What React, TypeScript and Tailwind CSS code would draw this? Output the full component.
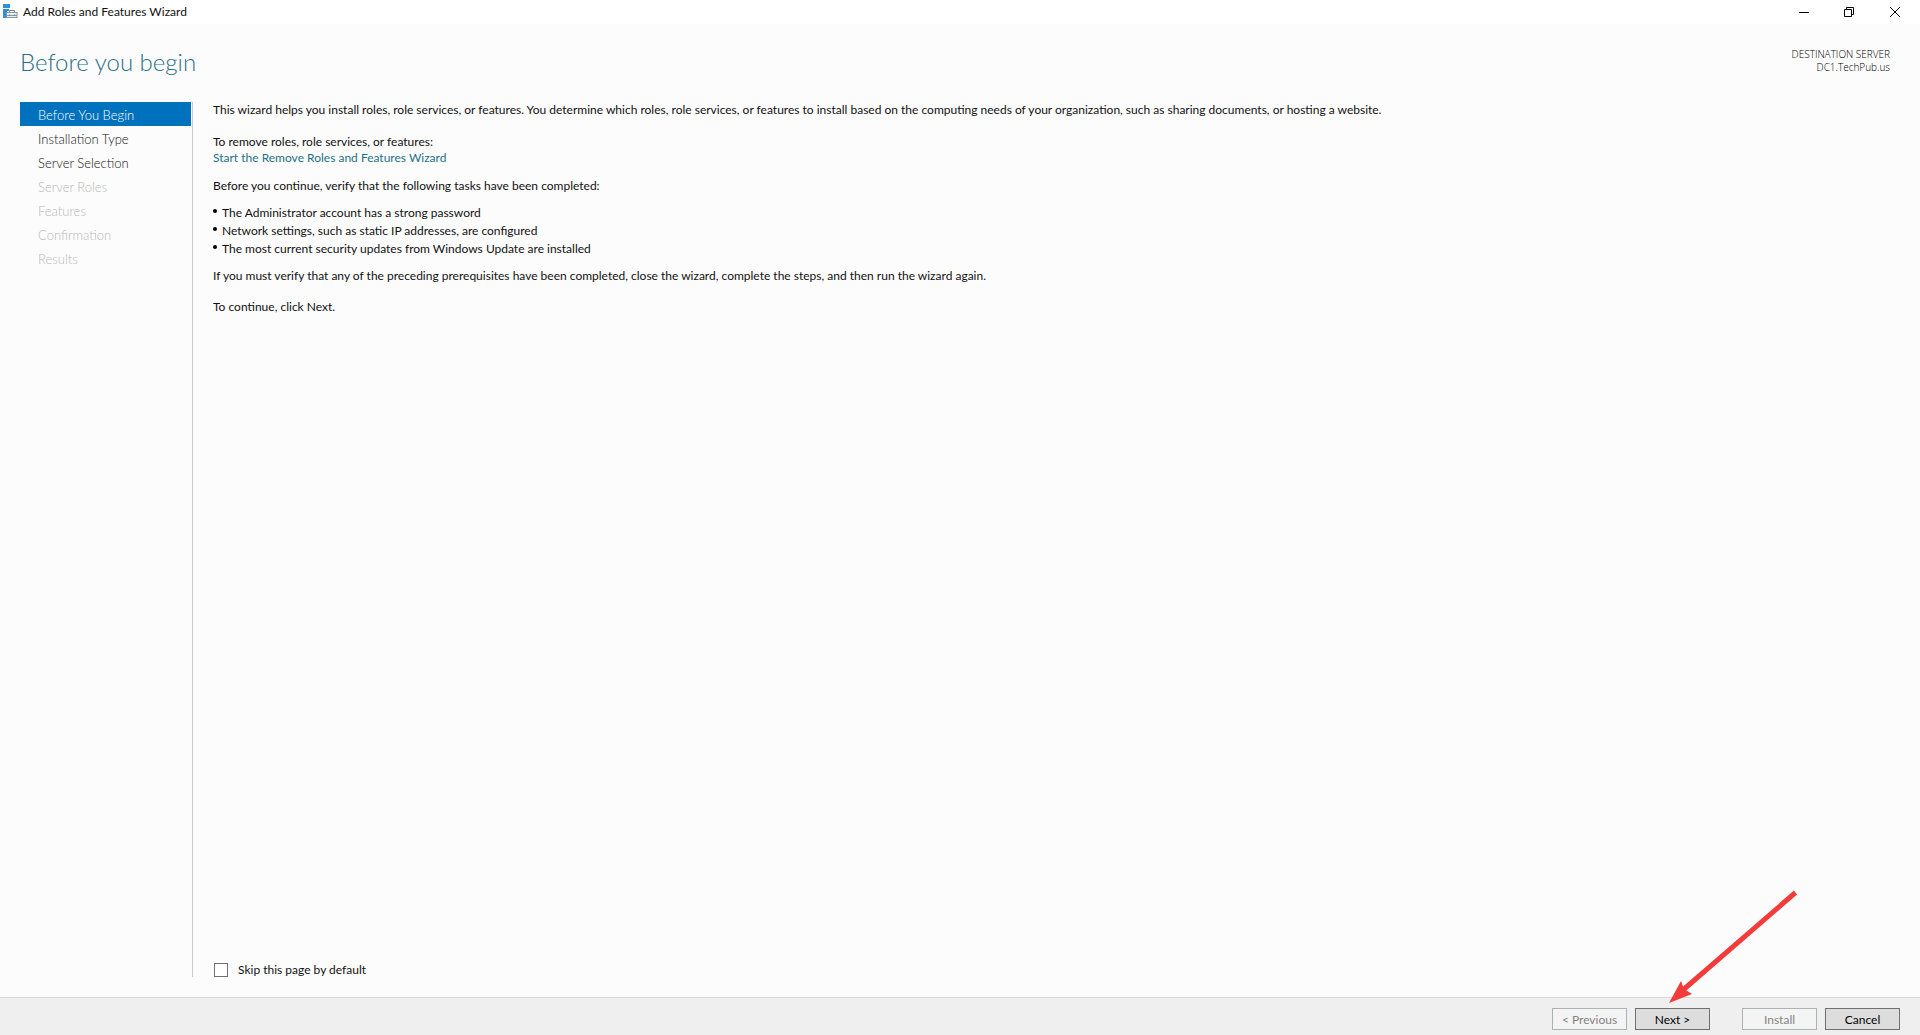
import React, { useState } from 'react';
import { clsx } from 'clsx';

const steps = [
    { name: 'Before You Begin', enabled: true },
    { name: 'Installation Type', enabled: true },
    { name: 'Server Selection', enabled: true },
    { name: 'Server Roles', enabled: false },
    { name: 'Features', enabled: false },
    { name: 'Confirmation', enabled: false },
    { name: 'Results', enabled: false },
];

const tasks = [
    'The Administrator account has a strong password',
    'Network settings, such as static IP addresses, are configured',
    'The most current security updates from Windows Update are installed',
];

function ServerIcon() {
    return (
        <svg width="16" height="16" viewBox="0 0 16 16" aria-hidden="true">
            <path d="M1 0h7v4H1z" fill="#2d8fd5" />
            <path d="M1 5h6v2H5v7H1z" fill="#2d8fd5" />
            <path d="M7.5 8.500V6.500h5v2" fill="none" stroke="#6b8192" />
            <path d="M4 8h11.500v6H4z" fill="#8799a6" />
            <path d="M5 9h9.500v2H5zM5 12h9.500v1H5z" fill="#e9eef2" />
            <path d="M7 10.500h1v1H7zM12 10.500h1v1h-1z" fill="#5b7080" />
        </svg>
    );
}

function TitleBar() {
    return (
        <header className="flex h-6 items-center justify-between bg-white pl-0.5">
            <div className="flex items-center gap-[5px]">
                <ServerIcon />
                <span>Add Roles and Features Wizard</span>
            </div>
            <div className="flex h-5 pr-0.5">
                <button aria-label="Minimize" className="flex w-11 items-center justify-center">
                    <svg width="10" height="10" viewBox="0 0 10 10" stroke="#000" fill="none">
                        <path d="M0 5.500h10" />
                    </svg>
                </button>
                <button aria-label="Restore" className="flex w-[46px] items-center justify-center">
                    <svg width="10" height="10" viewBox="0 0 10 10" stroke="#000" fill="none">
                        <path d="M.5 2.500h7v7h-7zM2.500 2.500v-2h7v7h-2" />
                    </svg>
                </button>
                <button aria-label="Close" className="flex w-[46px] items-center justify-center">
                    <svg width="10" height="10" viewBox="0 0 10 10" stroke="#000" fill="none">
                        <path d="M0 0l10 10M10 0L0 10" />
                    </svg>
                </button>
            </div>
        </header>
    );
}

function WizardButton({ children, disabled }: { children: React.ReactNode; disabled?: boolean }) {
    return (
        <button
            disabled={disabled}
            className={clsx(
                'h-[22px] w-[75px] border pt-px text-center leading-5',
                disabled ? 'border-[#adb2b5] bg-[#f4f4f4] text-[#838383]' : 'border-[#707070] bg-[#dddddd] text-black'
            )}
        >
            {children}
        </button>
    );
}

export default function App() {
    const [skip, setSkip] = useState(false);

    return (
        <div className="flex min-h-screen flex-col bg-[#fcfcfc] font-['Lato','Noto_Sans',sans-serif] text-xs text-[#111]">
            <TitleBar />

            <div className="flex h-[78px] items-start justify-between pt-[22px] pr-[30px] pl-5">
                <h1 className="text-2xl leading-8 font-light text-[#2b6f87]">Before you begin</h1>
                <div className="pt-0.5 text-right font-['Open_Sans',sans-serif] text-[10px] leading-[13px] font-light text-black">
                    <p>DESTINATION SERVER</p>
                    <p>DC1.TechPub.us</p>
                </div>
            </div>

            <div className="flex flex-1 pb-5 pl-5">
                {/* Wizard steps */}
                <nav className="w-[173px] shrink-0 border-r border-[#c8c8c8] pr-px">
                    <ul>
                        {steps.map((step, idx) => (
                            <li key={step.name}>
                                <button
                                    disabled={!step.enabled}
                                    className={clsx(
                                        'block h-6 w-full pt-0.5 pl-[18px] text-left text-[13px] leading-[22px] font-light',
                                        idx === 0 && 'bg-[#0071bc] text-white',
                                        idx !== 0 && step.enabled && 'text-[#111]',
                                        !step.enabled && 'text-[#b8b8b8]'
                                    )}
                                >
                                    {step.name}
                                </button>
                            </li>
                        ))}
                    </ul>
                </nav>

                <main className="flex flex-1 flex-col pl-5">
                    <p>
                        This wizard helps you install roles, role services, or features. You determine which roles, role
                        services, or features to install based on the computing needs of your organization, such as
                        sharing documents, or hosting a website.
                    </p>
                    <p className="mt-4">To remove roles, role services, or features:</p>
                    <a href="#remove" className="self-start text-[#1f7088]">
                        Start the Remove Roles and Features Wizard
                    </a>
                    <p className="mt-3">Before you continue, verify that the following tasks have been completed:</p>
                    <ul className="mt-2.5 leading-[18px]">
                        {tasks.map((task) => (
                            <li key={task} className="flex gap-[5px]">
                                <span className="mt-[5px] size-1 rounded-full bg-black" />
                                {task}
                            </li>
                        ))}
                    </ul>
                    <p className="mt-2.5">
                        If you must verify that any of the preceding prerequisites have been completed, close the
                        wizard, complete the steps, and then run the wizard again.
                    </p>
                    <p className="mt-[15px]">To continue, click Next.</p>

                    <label className="mt-auto flex items-center gap-2.5 self-start pl-px leading-[14px]">
                        <input
                            type="checkbox"
                            checked={skip}
                            onChange={(e) => setSkip(e.target.checked)}
                            className="size-3.5 appearance-none border border-[#707070] bg-white checked:bg-[#0071bc]"
                        />
                        Skip this page by default
                    </label>
                </main>
            </div>

            <footer className="relative flex h-[38px] items-start justify-end border-t border-[#dadada] bg-[#efefef] pt-2.5 pr-5">
                <div className="flex gap-2">
                    <WizardButton disabled>&lt; Previous</WizardButton>
                    <WizardButton>Next &gt;</WizardButton>
                </div>
                <div className="ml-8 flex gap-2">
                    <WizardButton disabled>Install</WizardButton>
                    <WizardButton>Cancel</WizardButton>
                </div>
                {/* Pointer to the Next button */}
                <svg
                    className="pointer-events-none absolute right-[120px] bottom-8"
                    width="131"
                    height="116"
                    viewBox="0 0 131 116"
                    aria-hidden="true"
                >
                    <path d="M126.500 5.500L14 103" stroke="#f43b3b" strokeWidth="5" />
                    <path d="M0 116L12 94L15 102L23 107z" fill="#f43b3b" />
                </svg>
            </footer>
        </div>
    );
}
